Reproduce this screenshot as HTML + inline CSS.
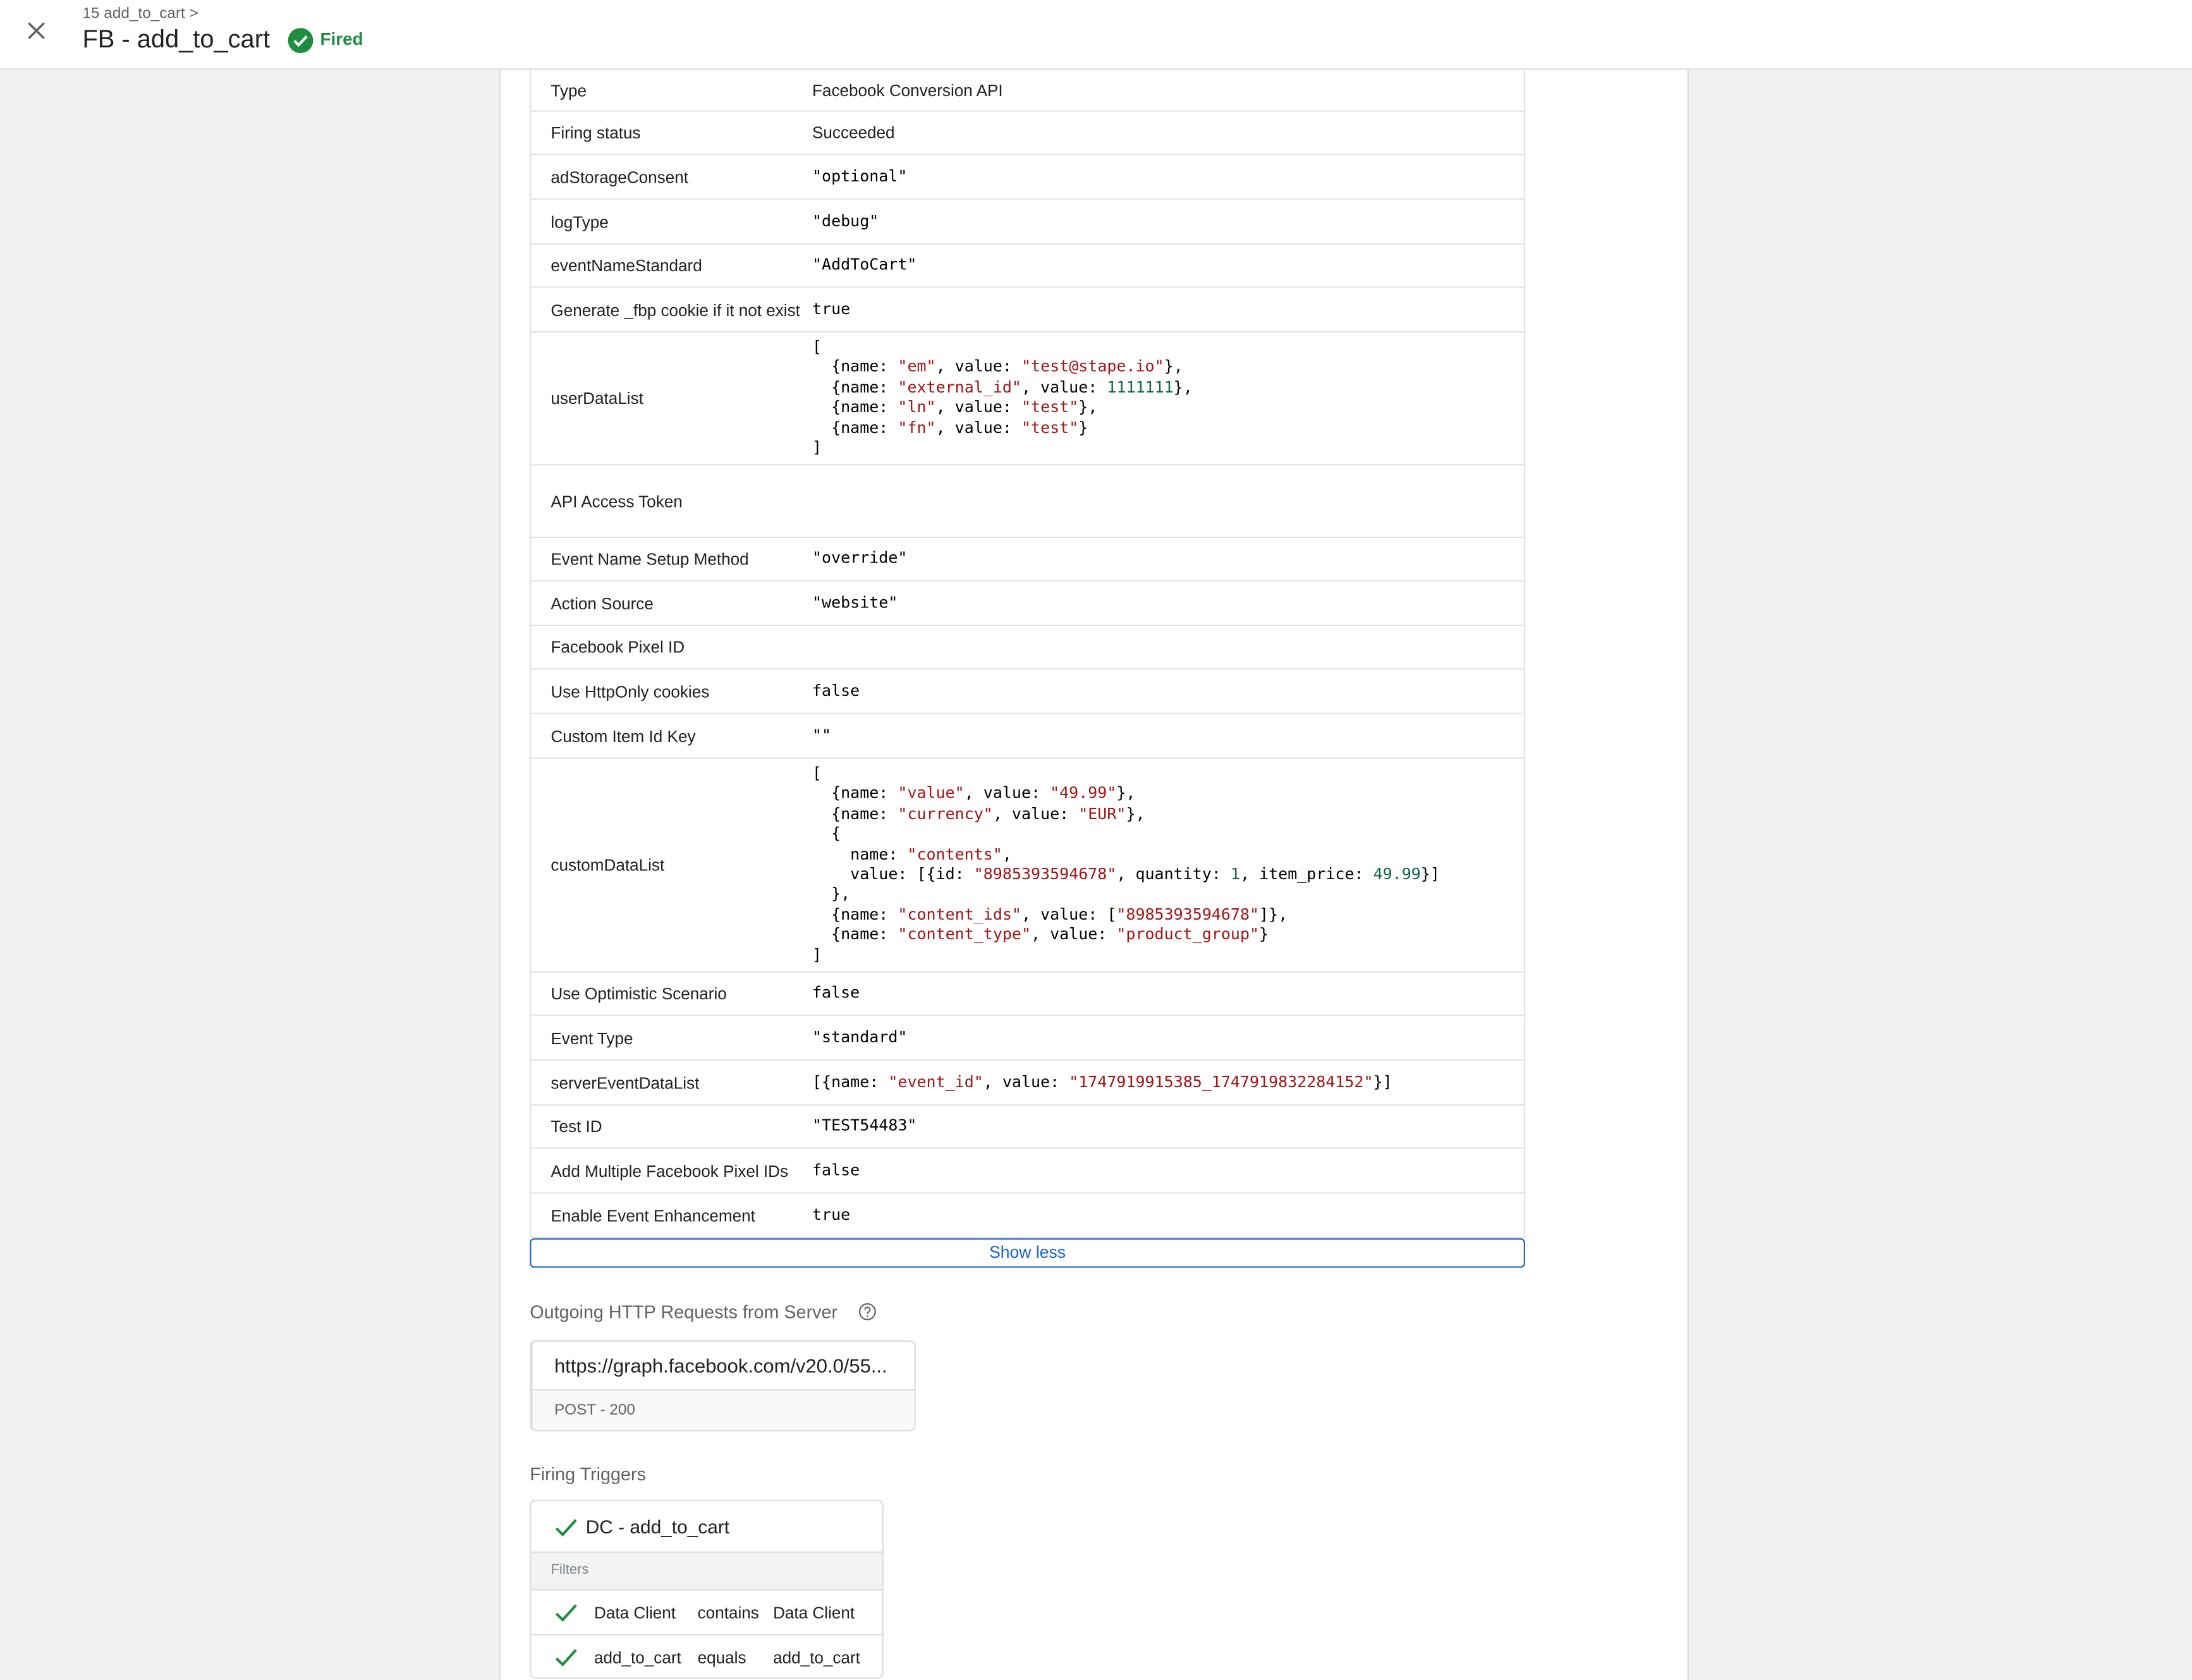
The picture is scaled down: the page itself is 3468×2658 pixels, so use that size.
<!DOCTYPE html>
<html><head><meta charset="utf-8"><style>
*{margin:0;padding:0;box-sizing:border-box}
html,body{width:3468px;height:2658px;overflow:hidden;background:#f0f1f3}
#s{position:absolute;left:0;top:0;width:1568px;height:1202px;overflow:hidden;transform:scale(2.2117,2.2113);transform-origin:0 0;font-family:"Liberation Sans",Arial,sans-serif;color:#202124;background:#f0f1f3}
.hdr{position:absolute;left:0;top:0;width:1568px;height:50px;background:#fff;border-bottom:1.5px solid #dadce0}
.panel{position:absolute;left:357px;top:50px;width:851px;height:1152px;background:#fff;border-left:1px solid #dadce0;border-right:1px solid #dadce0}
.row{position:absolute;left:379px;width:712px;border-left:1px solid #e3e3e3;border-right:1px solid #e3e3e3;border-bottom:1px solid #e3e3e3;display:flex;align-items:center;font-size:11.8px}
.row .l{position:absolute;left:14px;top:50%;transform:translateY(-50%);white-space:nowrap}
.row .v{position:absolute;left:201px;top:50%;transform:translateY(-50%);white-space:pre;font-family:"DejaVu Sans Mono","Liberation Mono",monospace;font-size:11.3px;line-height:14.4px;color:#000}
.row .t{font-family:"Liberation Sans",Arial,sans-serif;font-size:11.8px;color:#202124}
.s{color:#a31515}.k{color:#1a1aa6}.n{color:#116644}
.card{position:absolute;background:#fff;border:1px solid #dadce0;border-radius:4px;overflow:hidden}
.chk{position:absolute}
</style></head><body><div id="s">
<div class="hdr">
<svg style="position:absolute;left:19px;top:15px" width="14" height="14" viewBox="0 0 14 14"><path d="M1.5 1.5L12.5 12.5M12.5 1.5L1.5 12.5" stroke="#5f6368" stroke-width="1.6"/></svg>
<div style="position:absolute;left:59px;top:4px;font-size:11px;color:#5f6368">15 add_to_cart &gt;</div>
<div style="position:absolute;left:59px;top:18px;font-size:18px;color:#202124">FB - add_to_cart</div>
<svg style="position:absolute;left:206px;top:20px" width="18" height="18" viewBox="0 0 18 18"><circle cx="9" cy="9" r="9" fill="#1e8e3e"/><path d="M4.6 9.2l3 3 5.8-6.2" stroke="#fff" stroke-width="1.9" fill="none"/></svg>
<div style="position:absolute;left:229px;top:21px;font-size:12.6px;font-weight:bold;color:#1e8e3e">Fired</div>
</div>
<div class="panel"></div>

<div class="row" style="top:50px;height:30px"><span class="l">Type</span><span class="v t">Facebook Conversion API</span></div>
<div class="row" style="top:80px;height:31px"><span class="l">Firing status</span><span class="v t">Succeeded</span></div>
<div class="row" style="top:111px;height:32px"><span class="l">adStorageConsent</span><span class="v s">"optional"</span></div>
<div class="row" style="top:143px;height:32px"><span class="l">logType</span><span class="v s">"debug"</span></div>
<div class="row" style="top:175px;height:31px"><span class="l">eventNameStandard</span><span class="v s">"AddToCart"</span></div>
<div class="row" style="top:206px;height:32px"><span class="l">Generate _fbp cookie if it not exist</span><span class="v k">true</span></div>
<div class="row" style="top:238px;height:95px"><span class="l">userDataList</span><span class="v">[
  {name: <span class="s">"em"</span>, value: <span class="s">"test@stape.io"</span>},
  {name: <span class="s">"external_id"</span>, value: <span class="n">1111111</span>},
  {name: <span class="s">"ln"</span>, value: <span class="s">"test"</span>},
  {name: <span class="s">"fn"</span>, value: <span class="s">"test"</span>}
]</span></div>
<div class="row" style="top:333px;height:52px"><span class="l">API Access Token</span></div>
<div class="row" style="top:385px;height:31px"><span class="l">Event Name Setup Method</span><span class="v s">"override"</span></div>
<div class="row" style="top:416px;height:32px"><span class="l">Action Source</span><span class="v s">"website"</span></div>
<div class="row" style="top:448px;height:31px"><span class="l">Facebook Pixel ID</span></div>
<div class="row" style="top:479px;height:32px"><span class="l">Use HttpOnly cookies</span><span class="v k">false</span></div>
<div class="row" style="top:511px;height:32px"><span class="l">Custom Item Id Key</span><span class="v s">""</span></div>
<div class="row" style="top:543px;height:153px"><span class="l">customDataList</span><span class="v">[
  {name: <span class="s">"value"</span>, value: <span class="s">"49.99"</span>},
  {name: <span class="s">"currency"</span>, value: <span class="s">"EUR"</span>},
  {
    name: <span class="s">"contents"</span>,
    value: [{id: <span class="s">"8985393594678"</span>, quantity: <span class="n">1</span>, item_price: <span class="n">49.99</span>}]
  },
  {name: <span class="s">"content_ids"</span>, value: [<span class="s">"8985393594678"</span>]},
  {name: <span class="s">"content_type"</span>, value: <span class="s">"product_group"</span>}
]</span></div>
<div class="row" style="top:696px;height:31px"><span class="l">Use Optimistic Scenario</span><span class="v k">false</span></div>
<div class="row" style="top:727px;height:32px"><span class="l">Event Type</span><span class="v s">"standard"</span></div>
<div class="row" style="top:759px;height:32px"><span class="l">serverEventDataList</span><span class="v">[{name: <span class="s">"event_id"</span>, value: <span class="s">"1747919915385_1747919832284152"</span>}]</span></div>
<div class="row" style="top:791px;height:31px"><span class="l">Test ID</span><span class="v s">"TEST54483"</span></div>
<div class="row" style="top:822px;height:32px"><span class="l">Add Multiple Facebook Pixel IDs</span><span class="v k">false</span></div>
<div class="row" style="top:854px;height:32px"><span class="l">Enable Event Enhancement</span><span class="v k">true</span></div>
<div style="position:absolute;left:379px;top:886px;width:712px;height:21px;border:1.5px solid #1a62d0;border-radius:3px;text-align:center;font-size:12px;line-height:18px;color:#1a62d0;background:#fff">Show less</div>

<div style="position:absolute;left:379px;top:931px;font-size:13px;color:#5f6368">Outgoing HTTP Requests from Server</div>
<svg style="position:absolute;left:614px;top:932px" width="13" height="13" viewBox="0 0 13 13"><circle cx="6.5" cy="6.5" r="5.6" fill="none" stroke="#5f6368" stroke-width="1"/><path d="M4.7 5.1a1.8 1.8 0 1 1 2.6 1.6c-.6.3-.8.7-.8 1.3" fill="none" stroke="#5f6368" stroke-width="1"/><circle cx="6.5" cy="9.6" r=".6" fill="#5f6368"/></svg>
<div class="card" style="left:379px;top:959px;width:276px;height:65px;border-left:2.5px solid #dadce0">
<div style="position:absolute;left:0;top:0;width:100%;height:35px;border-bottom:1px solid #dadce0;font-size:14px;line-height:35px;padding-left:15.5px">https://graph.facebook.com/v20.0/55...</div>
<div style="position:absolute;left:0;top:35px;width:100%;height:30px;background:#f8f9fa;font-size:11px;color:#5f6368;line-height:28px;padding-left:15.5px">POST - 200</div>
</div>

<div style="position:absolute;left:379px;top:1047px;font-size:13px;color:#5f6368">Firing Triggers</div>
<div class="card" style="left:379px;top:1073px;width:253px;height:128px">
<svg class="chk" style="left:17px;top:12px" width="16" height="14" viewBox="0 0 16 14"><path d="M1 7.5l4.5 4.5L15 1.5" fill="none" stroke="#1e8e3e" stroke-width="1.9"/></svg>
<div style="position:absolute;left:39px;top:11px;font-size:13.5px">DC - add_to_cart</div>
<div style="position:absolute;left:0;top:36px;width:100%;height:28px;background:#f1f3f4;border-top:1px solid #dadce0;border-bottom:1px solid #dadce0;font-size:10px;color:#80868b;line-height:26px;padding-left:14px">Filters</div>
<svg class="chk" style="left:17px;top:73px" width="16" height="14" viewBox="0 0 16 14"><path d="M1 7.5l4.5 4.5L15 1.5" fill="none" stroke="#1e8e3e" stroke-width="1.9"/></svg>
<div style="position:absolute;left:45px;top:73px;font-size:11.8px">Data Client</div>
<div style="position:absolute;left:119px;top:73px;font-size:11.8px">contains</div>
<div style="position:absolute;left:173px;top:73px;font-size:11.8px">Data Client</div>
<div style="position:absolute;left:0;top:95px;width:100%;border-top:1px solid #dadce0"></div>
<svg class="chk" style="left:17px;top:105px" width="16" height="14" viewBox="0 0 16 14"><path d="M1 7.5l4.5 4.5L15 1.5" fill="none" stroke="#1e8e3e" stroke-width="1.9"/></svg>
<div style="position:absolute;left:45px;top:105px;font-size:11.8px">add_to_cart</div>
<div style="position:absolute;left:119px;top:105px;font-size:11.8px">equals</div>
<div style="position:absolute;left:173px;top:105px;font-size:11.8px">add_to_cart</div>
</div>
</div></body></html>
